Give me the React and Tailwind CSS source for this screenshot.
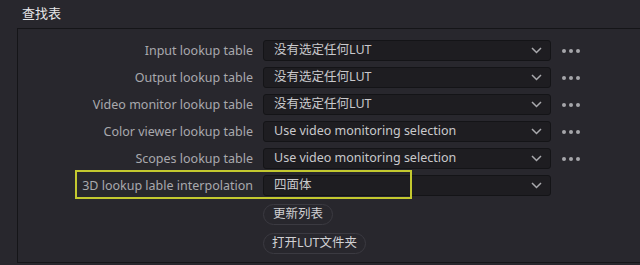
import React from "react";

const rows = [
    { label: "Input lookup table", value: "没有选定任何LUT", more: true },
    { label: "Output lookup table", value: "没有选定任何LUT", more: true },
    { label: "Video monitor lookup table", value: "没有选定任何LUT", more: true },
    { label: "Color viewer lookup table", value: "Use video monitoring selection", more: true },
    { label: "Scopes lookup table", value: "Use video monitoring selection", more: true },
    { label: "3D lookup lable interpolation", value: "四面体", more: false, highlight: true },
];

const font = { fontFamily: '"Noto Sans", "Noto Sans CJK SC", sans-serif' };

function Chevron() {
    return (
        <svg width="11" height="7" viewBox="0 0 11 7" className="text-[#a9a9ad]">
            <path d="M1 1 L5.5 5.5 L10 1" fill="none" stroke="currentColor" strokeWidth="1.5" />
        </svg>
    );
}

function Dots() {
    return (
        <div className="flex items-center gap-[3px] ml-[11px]">
            <span className="w-[4px] h-[4px] rounded-full bg-[#a6a6aa]" />
            <span className="w-[4px] h-[4px] rounded-full bg-[#a6a6aa]" />
            <span className="w-[4px] h-[4px] rounded-full bg-[#a6a6aa]" />
        </div>
    );
}

export default function App() {
    return (
        <div className="w-[640px] h-[265px] bg-[#28272d] overflow-hidden flex flex-col" style={font}>
            <div className="h-[28px] pl-[22px] pt-[4px] text-[13px] text-[#e6e6e8] leading-[18px]">查找表</div>
            <div className="ml-[17px] h-[235px] border-l border-t border-b border-[#151518] bg-[#28272d] pt-[8px] flex flex-col">
                {rows.map((r) => (
                    <div key={r.label} className="relative flex items-center h-[27px]">
                        {r.highlight && (
                            <div className="absolute left-[57px] top-[-2px] w-[337px] h-[29px] border-2 border-[#c3c82f]" />
                        )}
                        <div className="w-[235px] text-right text-[12.5px] text-[#a9a9ad] leading-[20px] whitespace-nowrap">{r.label}</div>
                        <div className="ml-[10px] w-[288px] h-[21px] bg-[#1e1d21] border border-[#141417] rounded-[3px] flex items-center justify-between pl-[10px] pr-[8px] text-[12.5px] text-[#c9c9cc]">
                            <span className="whitespace-nowrap">{r.value}</span>
                            <Chevron />
                        </div>
                        {r.more && <Dots />}
                    </div>
                ))}
                <div className="ml-[245px] mt-[5px] flex flex-col items-start gap-[8px]">
                    <button className="h-[21px] px-[9px] rounded-full border border-[#3b3a41] bg-[#28272d] text-[12.5px] text-[#d0d0d3] leading-none">更新列表</button>
                    <button className="h-[21px] px-[8px] rounded-full border border-[#3b3a41] bg-[#28272d] text-[12.5px] text-[#d0d0d3] leading-none">打开LUT文件夹</button>
                </div>
            </div>
        </div>
    );
}
